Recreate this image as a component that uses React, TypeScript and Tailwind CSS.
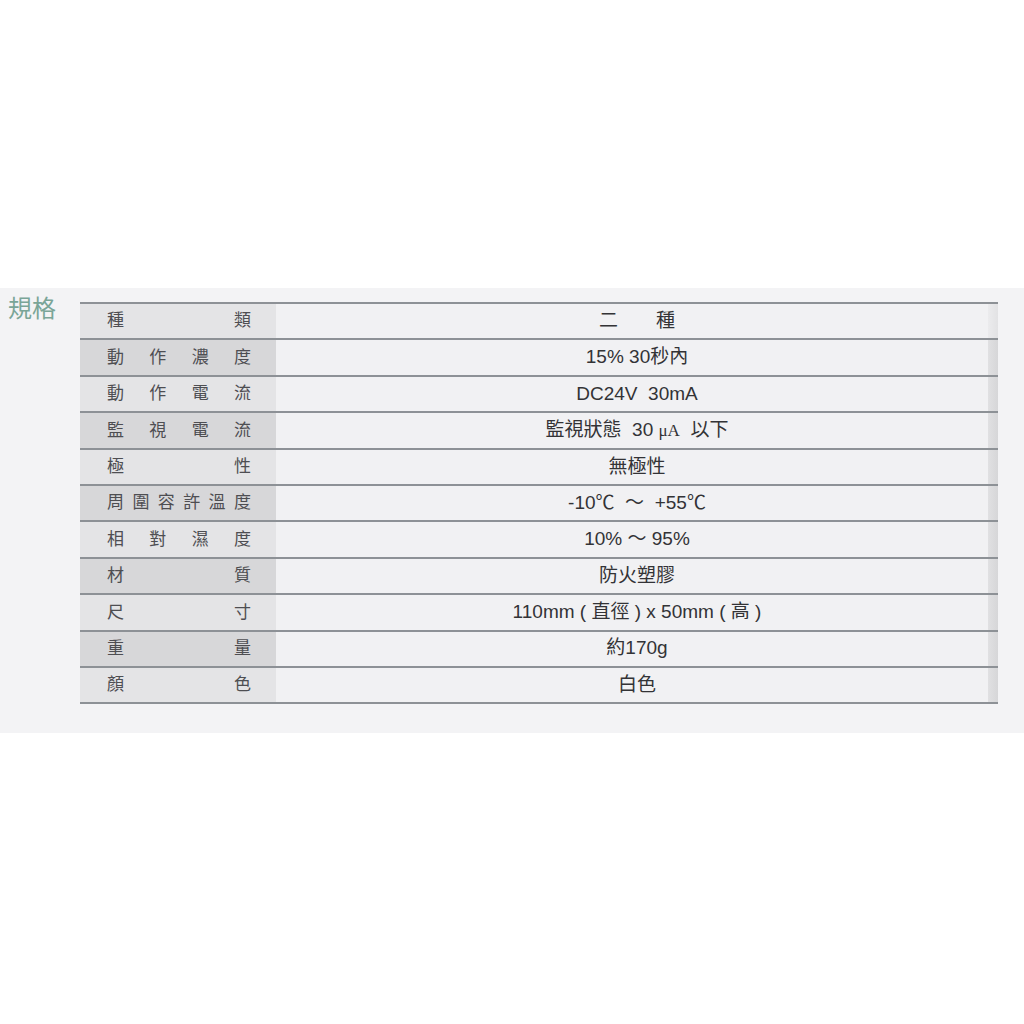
import React from 'react';

const rows: { label: string; value: React.ReactNode }[] = [
  { label: '種類', value: <span className="tracking-[38px] pl-[38px]">二種</span> },
  { label: '動作濃度', value: '15% 30秒內' },
  { label: '動作電流', value: 'DC24V\u00a0\u00a030mA' },
  { label: '監視電流', value: <>監視狀態&nbsp; 30&nbsp;<span className="font-['Liberation_Serif'] text-[17px]">μA</span>&nbsp; 以下</> },
  { label: '極性', value: '無極性' },
  { label: '周圍容許溫度', value: '-10℃\u00a0 ～\u00a0 +55℃' },
  { label: '相對濕度', value: '10% ～ 95%' },
  { label: '材質', value: '防火塑膠' },
  { label: '尺寸', value: '110mm ( 直徑 ) x 50mm ( 高 )' },
  { label: '重量', value: '約170g' },
  { label: '顏色', value: '白色' },
];

export default function App() {
  return (
    <div className="min-h-[1024px] bg-white font-['Liberation_Sans','Noto_Sans_CJK_TC',sans-serif]">
      <div className="h-[288px]" />
      <div className="h-[445px] bg-[#f3f3f5] flex">
        <div className="w-[80px] pl-[8px] pt-[5px] text-[24px] leading-[32px] text-[#7aa597]">規格</div>
        <div className="w-[918px] mt-[14px] border-t-2 border-[#8d9196] self-start">
          {rows.map((r, i) => (
            <div key={r.label} className="flex h-[36.4px] border-b-2 border-[#8d9196]">
              <div
                className={`w-[196px] flex items-center justify-between pl-[27px] pr-[25px] text-[17px] text-[#4e4e52] ${
                  i % 2 === 1 ? 'bg-[#d7d7d9]' : 'bg-[#e4e4e6]'
                }`}
              >
                {r.label.split('').map((c, j) => (
                  <span key={j}>{c}</span>
                ))}
              </div>
              <div className="flex-1 flex items-center justify-center pl-[10px] bg-[#f1f1f3] text-[19px] text-[#333336]">
                {r.value}
              </div>
              <div
                className={`w-[10px] ${
                  i === 0 ? 'bg-gradient-to-r from-[#ebebed] to-[#e2e2e4]' : 'bg-gradient-to-r from-[#e0e0e2] to-[#d6d6d8]'
                }`}
              />
            </div>
          ))}
        </div>
      </div>
    </div>
  );
}
